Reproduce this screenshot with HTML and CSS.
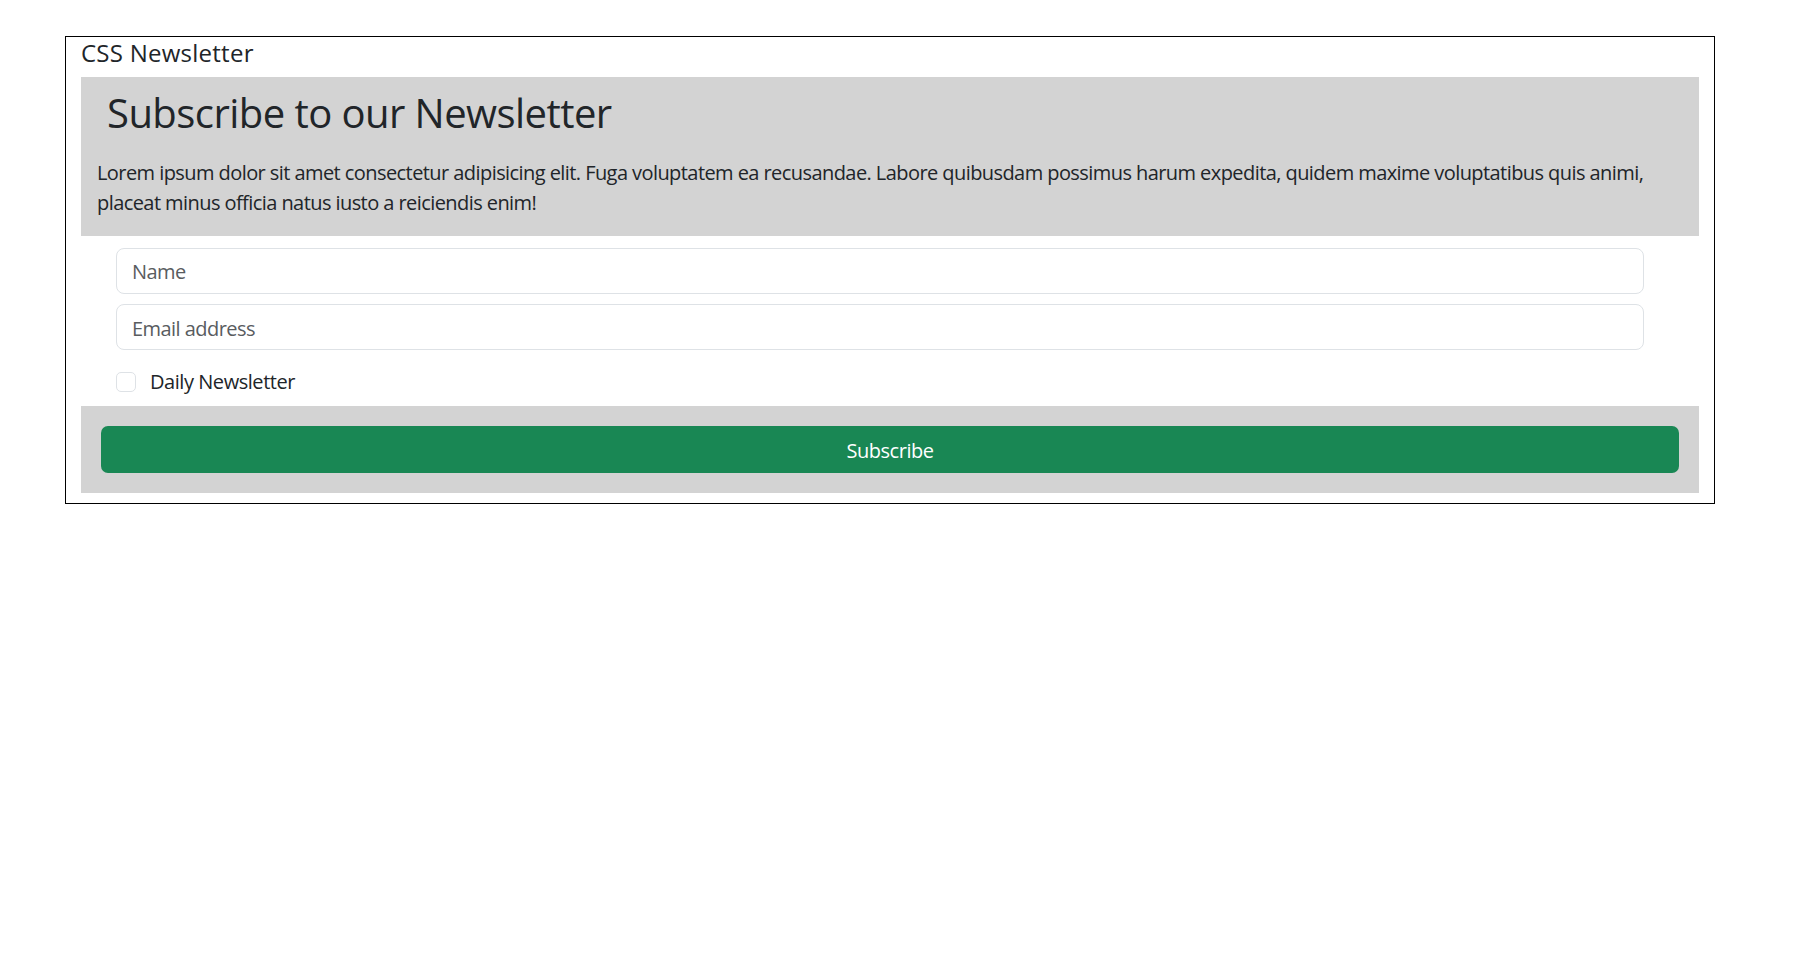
FILE: index.html
```html
<!DOCTYPE html>
<html lang="en">
<head>
<meta charset="utf-8">
<title>CSS Newsletter</title>
<link rel="stylesheet" href="styles.css">
</head>
<body>
<div class="frame">
  <div class="brand">CSS Newsletter</div>
  <section class="intro">
    <h1 class="intro-title">Subscribe to our Newsletter</h1>
    <p class="intro-text">Lorem ipsum dolor sit amet consectetur adipisicing elit. Fuga voluptatem ea recusandae. Labore quibusdam possimus harum expedita, quidem maxime voluptatibus quis animi, placeat minus officia natus iusto a reiciendis enim!</p>
  </section>
  <form class="signup">
    <input class="field" type="text" placeholder="Name">
    <input class="field" type="email" placeholder="Email address">
    <label class="check">
      <input class="check-box" type="checkbox">
      <span class="check-label">Daily Newsletter</span>
    </label>
    <div class="actions">
      <button class="btn-subscribe" type="button">Subscribe</button>
    </div>
  </form>
</div>
</body>
</html>
```

FILE: styles.css
```css
* {
  box-sizing: border-box;
}

body {
  margin: 0;
  background: #ffffff;
  color: #212529;
  font-family: "Open Sans", "Noto Sans", "Liberation Sans", sans-serif;
}

.frame {
  width: 1650px;
  margin: 36px 0 0 65px;
  border: 1px solid #000000;
  padding: 0 15px 10px;
}

.brand {
  font-size: 24px;
  line-height: 29px;
  margin: 1px 0 10px;
  letter-spacing: 0.25px;
  font-weight: 500;
}

.intro {
  background: #d3d3d3;
  padding: 12px 16px 18px;
}

.intro-title {
  margin: 0 0 21px 10px;
  font-size: 40px;
  line-height: 48px;
  font-weight: 500;
  letter-spacing: -0.55px;
}

.intro-text {
  margin: 0;
  font-size: 20px;
  line-height: 30px;
  letter-spacing: -0.57px;
}

.signup {
  display: flex;
  flex-direction: column;
  margin: 12px 0 0;
}

.field {
  display: block;
  height: 46px;
  margin: 0 55px 10px 35px;
  padding: 8px 15px 6px;
  border: 1px solid #dee2e6;
  border-radius: 8px;
  background: #ffffff;
  font-family: inherit;
  font-size: 20px;
  line-height: 30px;
  color: #212529;
  letter-spacing: -0.55px;
}

.field:first-child {
  padding: 7px 15px;
}

.field::placeholder {
  color: #595c5f;
  opacity: 1;
}

.check {
  display: flex;
  align-items: center;
  height: 30px;
  margin: 7px 0 9px 35px;
}

.check-box {
  appearance: none;
  -webkit-appearance: none;
  width: 20px;
  height: 20px;
  margin: 0;
  border: 1px solid #dee2e6;
  border-radius: 5px;
  background: #ffffff;
}

.check-label {
  margin-left: 14px;
  font-size: 20px;
  line-height: 30px;
  letter-spacing: -0.45px;
}

.actions {
  background: #d3d3d3;
  padding: 20px;
}

.btn-subscribe {
  display: block;
  width: 100%;
  height: 47px;
  padding: 10px 16px 7px;
  border: 0;
  border-radius: 7px;
  background: #198754;
  color: #ffffff;
  font-family: inherit;
  font-size: 20px;
  line-height: 30px;
  letter-spacing: -0.45px;
}
```
